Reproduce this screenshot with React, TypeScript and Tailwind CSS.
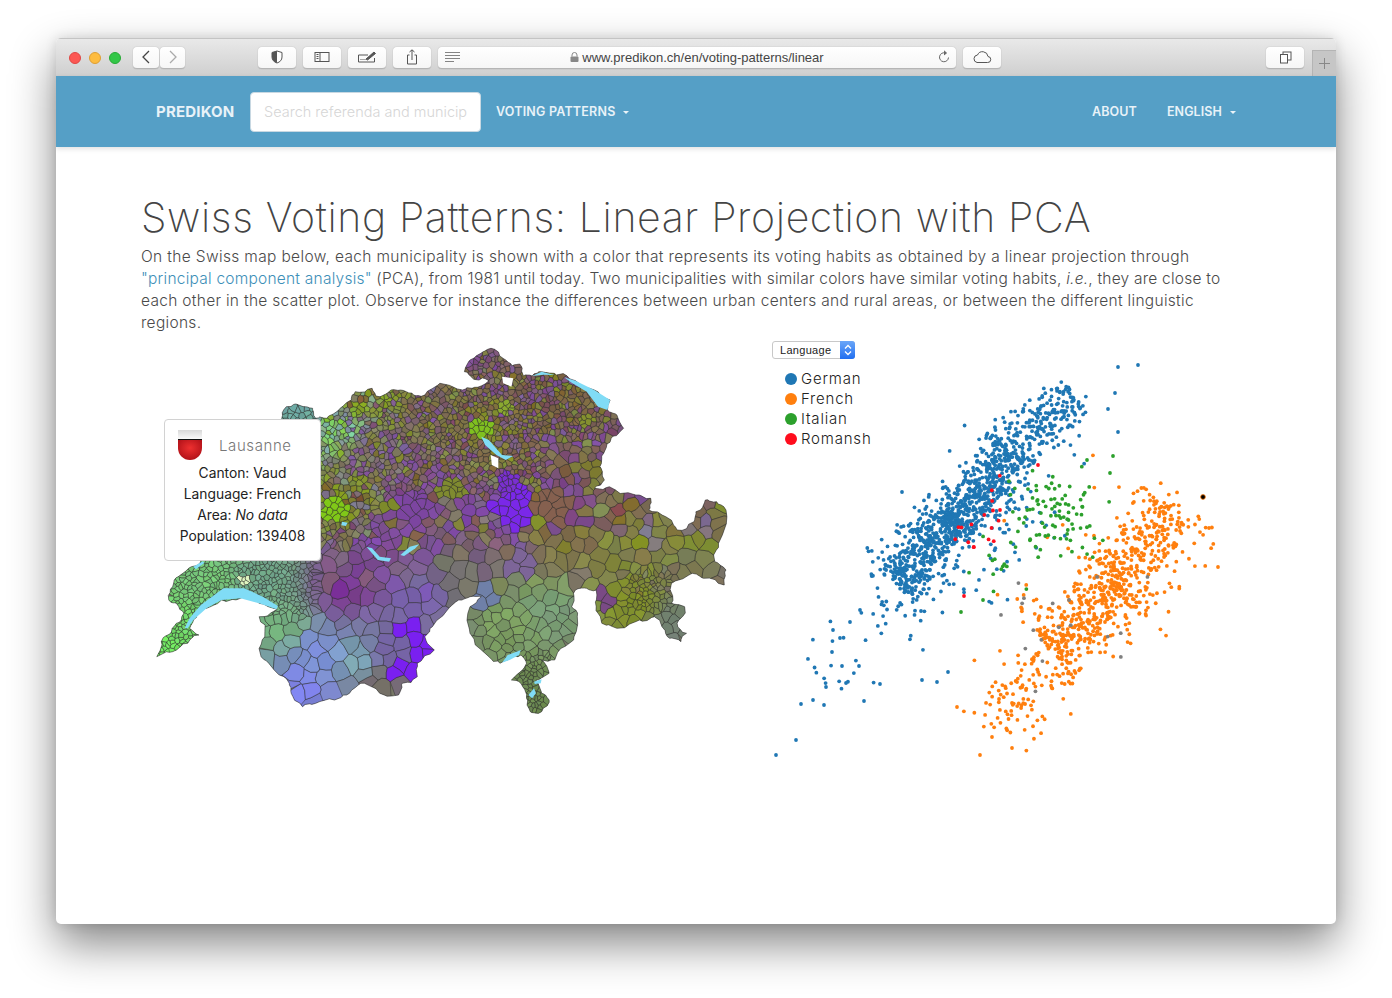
import { useMemo } from 'react';

type Pt = [number, number];

// all map numbers below are traced from the picture, then scaled to page pixels
const toPage = (p: Pt): Pt => [150 + p[0] * 0.3765, 340 + p[1] / 3];
const toPath = (pts: Pt[]) => 'M' + pts.map((p) => p[0].toFixed(1) + ' ' + p[1].toFixed(1)).join('L') + 'Z';

const outlineRaw: Pt[] = [
  [18, 950], [30, 905], [55, 880], [70, 850], [90, 820], [70, 790], [50, 780], [60, 740], [75, 710], [110, 680], [135, 664],
  [215, 600], [300, 420], [335, 270], [350, 235], [362, 200], [395, 195], [432, 205], [440, 235], [470, 235], [505, 205],
  [535, 180], [545, 155], [590, 145], [600, 168], [640, 150], [665, 150], [700, 165], [730, 165], [770, 130], [830, 150],
  [862, 142], [900, 122], [860, 118], [835, 95], [850, 60], [885, 35], [915, 28], [945, 60], [960, 78], [982, 72], [992, 108],
  [1015, 108], [1040, 95], [1080, 105], [1130, 122], [1180, 150], [1222, 180], [1215, 210], [1240, 225], [1258, 265],
  [1225, 295], [1205, 340], [1195, 380], [1207, 420], [1180, 445], [1220, 440], [1290, 465], [1330, 475], [1325, 510],
  [1370, 530], [1400, 570], [1445, 545], [1450, 515], [1475, 480], [1505, 485], [1530, 510], [1510, 610], [1500, 665],
  [1530, 690], [1525, 735], [1470, 715], [1440, 700], [1385, 730], [1385, 790], [1420, 800], [1400, 850], [1425, 880],
  [1410, 905], [1380, 895], [1360, 860], [1340, 830], [1300, 840], [1240, 865], [1200, 850], [1185, 800], [1185, 750],
  [1160, 745], [1130, 750], [1120, 800], [1135, 830], [1125, 900], [1075, 960], [1040, 960], [1060, 1000], [1025, 1020],
  [1040, 1060], [1060, 1080], [1040, 1115], [1010, 1115], [1000, 1075], [990, 1040], [960, 1020], [1000, 970], [985, 945],
  [950, 960], [930, 970], [900, 950], [850, 880], [850, 800], [880, 770], [850, 770], [820, 780], [790, 810], [750, 860],
  [730, 890], [755, 930], [710, 970], [710, 1010], [670, 1030], [660, 1065], [610, 1060], [560, 1030], [530, 1060],
  [490, 1080], [440, 1090], [405, 1100], [375, 1060], [370, 1030], [330, 990], [295, 950], [305, 890], [290, 830],
  [338, 808], [290, 790], [240, 775], [190, 780], [150, 805], [115, 840], [105, 865], [130, 885], [100, 910], [60, 935],
];

const lakesRaw: Pt[][] = [
  [[92, 865], [105, 835], [135, 795], [195, 745], [250, 745], [300, 770], [340, 798], [336, 808], [290, 790], [240, 775], [190, 780], [150, 805], [115, 840], [100, 865]],
  [[575, 620], [590, 625], [610, 650], [640, 655], [635, 665], [605, 660]],
  [[665, 645], [690, 620], [715, 613], [705, 625], [675, 648]],
  [[880, 290], [900, 300], [935, 345], [965, 348], [945, 360], [920, 345], [890, 315]],
  [[1100, 112], [1130, 122], [1180, 150], [1222, 180], [1215, 210], [1190, 200], [1160, 155], [1120, 128]],
  [[1015, 108], [1040, 95], [1075, 105], [1045, 104]],
  [[935, 968], [950, 945], [985, 930], [980, 945], [955, 960]],
  [[1005, 1065], [1020, 1045], [1025, 1060], [1015, 1075]],
  [[1020, 1025], [1040, 1018], [1038, 1030], [1022, 1032]],
  [[510, 545], [525, 548], [520, 558], [508, 556]],
  [[115, 680], [140, 664], [145, 668], [122, 688]],
];

const anchors: [number, number, string][] = [
  [50, 920, '#6ee860'], [90, 870, '#70d868'], [150, 720, '#74c878'], [300, 720, '#6fa78a'], [330, 850, '#73b27e'], [400, 220, '#6aa8a0'],
  [500, 270, '#80d8a0'], [560, 170, '#84b020'], [590, 330, '#7c6a78'], [520, 470, '#7f9a20'], [650, 620, '#7a4a90'], [520, 740, '#7a3c8e'],
  [450, 950, '#7a90d8'], [400, 1050, '#7a80e4'], [550, 960, '#78a2b2'], [640, 930, '#7060a0'], [610, 1040, '#706868'],
  [830, 720, '#707070'], [720, 750, '#7860b0'], [900, 520, '#7a4a90'], [950, 850, '#7aa060'], [1060, 800, '#78a078'], [1000, 1060, '#6a8a50'],
  [1120, 620, '#807a48'], [1300, 620, '#809030'], [1460, 600, '#7f9a2e'], [1450, 690, '#77775a'], [1490, 510, '#75606a'], [1280, 790, '#7f8f28'],
  [1390, 850, '#6f7f70'], [900, 260, '#807a30'], [750, 230, '#7a6a50'], [1100, 350, '#7a5a60'], [1100, 450, '#7a5060'],
  [1060, 510, '#806050'], [890, 70, '#7a5a70'], [1220, 500, '#77506a'], [1050, 170, '#78603f'], [700, 480, '#7d4a8c'],
];

// cells with a strong colour of their own: [x, y, radius, colour]
const blobs: [number, number, number, string][] = [
  [970, 500, 62, '#7a28e8'], [950, 430, 34, '#7a30d0'], [690, 870, 34, '#7a20f0'], [735, 930, 38, '#7a20f0'], [682, 990, 44, '#7a20f0'],
  [880, 265, 30, '#80c020'], [490, 510, 35, '#80c818'], [940, 200, 22, '#8aa830'], [1070, 500, 55, '#85604f'], [510, 750, 30, '#7a2f98'],
  [885, 785, 36, '#6f80a8'], [985, 670, 36, '#7d6598'], [250, 720, 14, '#dff5c0'], [800, 450, 36, '#7f8a30'], [640, 495, 26, '#7d8a2a'],
  [700, 510, 50, '#7c45a0'], [1160, 240, 22, '#85902f'], [1180, 385, 24, '#7d7a30'], [1250, 520, 14, '#8a4c50'], [1210, 780, 30, '#7a4a85'],
];

const hex = (c: string) => [1, 3, 5].map((i) => parseInt(c.slice(i, i + 2), 16));

function rng(seed: number) {
  return () => {
    seed = (seed + 0x6d2b79f5) | 0;
    let t = Math.imul(seed ^ (seed >>> 15), 1 | seed);
    t = (t + Math.imul(t ^ (t >>> 7), 61 | t)) ^ t;
    return ((t ^ (t >>> 14)) >>> 0) / 4294967296;
  };
}

function inside(p: Pt, poly: Pt[]) {
  let hit = false;
  for (let i = 0, j = poly.length - 1; i < poly.length; j = i++) {
    const a = poly[i];
    const b = poly[j];
    if (a[1] > p[1] !== b[1] > p[1] && p[0] < ((b[0] - a[0]) * (p[1] - a[1])) / (b[1] - a[1]) + a[0]) hit = !hit;
  }
  return hit;
}

// how far apart the municipalities are, in page pixels
function spacing(zx: number, zy: number) {
  if (zx < 150 && zy > 820) return 2.6;
  if (zx < 440 && zy > 660 && zy < 830) return 3;
  if (zy > 940 && zx > 940 && zx < 1070) return 2.8;
  if (zx > 1260 && zx < 1390 && zy > 690 && zy < 810) return 3.2;
  if (zy < 300 && zx > 450) return zx > 1200 ? 6 : 3.4;
  if (zy < 470) return zx > 1050 ? 8.5 : 4.2;
  if (zy < 620) return zx > 1000 ? 12 : zx < 600 ? 4.4 : 9;
  if (zy < 800) return 15;
  return zx > 850 ? 9 : 15;
}

function clipHalf(poly: Pt[], a: number, b: number, c: number) {
  const out: Pt[] = [];
  for (let i = 0; i < poly.length; i++) {
    const p = poly[i];
    const q = poly[(i + 1) % poly.length];
    const dp = a * p[0] + b * p[1] - c;
    const dq = a * q[0] + b * q[1] - c;
    if (dp <= 0) out.push(p);
    if (dp < 0 !== dq < 0 && dp !== 0 && dq !== 0) {
      const t = dp / (dp - dq);
      out.push([p[0] + (q[0] - p[0]) * t, p[1] + (q[1] - p[1]) * t]);
    }
  }
  return out;
}

function wobble(poly: Pt[], amount = 0.28) {
  const out: Pt[] = [];
  for (let i = 0; i < poly.length; i++) {
    const p = poly[i];
    const q = poly[(i + 1) % poly.length];
    const mx = (p[0] + q[0]) / 2;
    const my = (p[1] + q[1]) / 2;
    const len = Math.hypot(q[0] - p[0], q[1] - p[1]);
    const r = rng(Math.round(mx * 8) * 7919 + Math.round(my * 8));
    out.push(p);
    if (len > 3) out.push([mx + (r() - 0.5) * len * amount, my + (r() - 0.5) * len * amount]);
  }
  return out;
}

const outlinePage = wobble(wobble(outlineRaw.map(toPage), 0.3), 0.35);

function buildCells() {
  const rand = rng(1981);
  const outline = outlineRaw.map(toPage);
  const sites: Pt[] = [];
  for (let tries = 0; tries < 34000; tries++) {
    const zx = rand() * 1540;
    const zy = rand() * 1120;
    const p = toPage([zx, zy]);
    if (!inside(p, outline)) continue;
    const r = spacing(zx, zy) * (0.6 + rand() * 1.0);
    if (sites.every((s) => (s[0] - p[0]) ** 2 + (s[1] - p[1]) ** 2 > r * r)) sites.push(p);
  }
  const mixes = [hex('#7f40ac'), hex('#7c44a4'), hex('#84961f'), hex('#7a6052'), hex('#86823a')];
  return sites.map((s) => {
    const others = sites
      .filter((o) => o !== s && Math.abs(o[0] - s[0]) < 50 && Math.abs(o[1] - s[1]) < 50)
      .sort((a, b) => (a[0] - s[0]) ** 2 + (a[1] - s[1]) ** 2 - (b[0] - s[0]) ** 2 - (b[1] - s[1]) ** 2);
    let poly: Pt[] = [[s[0] - 34, s[1] - 34], [s[0] + 34, s[1] - 34], [s[0] + 34, s[1] + 34], [s[0] - 34, s[1] + 34]];
    for (const o of others) {
      const a = o[0] - s[0];
      const b = o[1] - s[1];
      poly = clipHalf(poly, a, b, (o[0] * o[0] + o[1] * o[1] - s[0] * s[0] - s[1] * s[1]) / 2);
      if (poly.length < 3) break;
    }
    const zx = (s[0] - 150) / 0.3765;
    const zy = (s[1] - 340) * 3;
    let sum = 0;
    const c = [0, 0, 0];
    for (const [ax, ay, col] of anchors) {
      const w = 1 / ((ax - zx) ** 2 + (ay - zy) ** 2 + 50) ** 1.8;
      const v = hex(col);
      sum += w;
      c[0] += v[0] * w;
      c[1] += v[1] * w;
      c[2] += v[2] * w;
    }
    let rgb = c.map((v) => v / sum);
    const north = zy < 620 && zx > 440 ? 0.85 : zy < 760 && zx > 440 ? 0.35 : 0.08;
    const pick = mixes[Math.floor(rand() * mixes.length)];
    rgb = rgb.map((v, i) => v + (pick[i] - v) * north * rand());
    const shade = 0.97 + rand() * 0.1;
    rgb = rgb.map((v) => Math.min(255, v * shade));
    for (const [bx, by, br, col] of blobs) {
      if ((bx - zx) ** 2 + (by - zy) ** 2 < br * br) rgb = hex(col);
    }
    return {
      d: toPath(wobble(poly)),
      fill: `rgb(${rgb.map((v) => Math.round(v)).join(',')})`,
    };
  });
}

function SwissMap() {
  const cells = useMemo(buildCells, []);
  const outline = toPath(outlinePage);
  return (
    <svg viewBox="141 340 600 390" width={600} height={390} className="block">
      <defs>
        <clipPath id="swiss">
          <path d={outline} />
        </clipPath>
      </defs>
      <g clipPath="url(#swiss)">
        <path d={outline} fill="#776" />
        {cells.map((c, i) => (
          <path key={i} d={c.d} fill={c.fill} stroke="#2a2a2a" strokeWidth={0.45} strokeLinejoin="round" />
        ))}
      </g>
      <path d={outline} fill="none" stroke="#333" strokeWidth={0.6} />
      {lakesRaw.map((l, i) => (
        <path key={i} d={toPath(l.map(toPage))} fill="#80dcf6" />
      ))}
      <path d={toPath(([[905, 345], [925, 355], [925, 385], [908, 375]] as Pt[]).map(toPage))} fill="#fff" />
      <path d={toPath(([[935, 110], [965, 115], [960, 140], [938, 130]] as Pt[]).map(toPage))} fill="#fff" />
    </svg>
  );
}

type Dot = { x: number; y: number; c: string };

function buildDots() {
  const rand = rng(4242);
  const gauss = () => Math.sqrt(-2 * Math.log(rand() + 1e-6)) * Math.cos(2 * Math.PI * rand());
  const dots: Dot[] = [];
  const ridge = (n: number, a: Pt, b: Pt, s: number, c: string) => {
    const dx = b[0] - a[0];
    const dy = b[1] - a[1];
    const len = Math.hypot(dx, dy);
    for (let i = 0; i < n; i++) {
      const t = rand();
      const off = gauss() * s;
      dots.push({ x: a[0] + dx * t - (dy / len) * off, y: a[1] + dy * t + (dx / len) * off, c });
    }
  };
  const blue = '#1f77b4';
  const orange = '#ff7f0e';
  const green = '#2ca02c';
  ridge(60, [820, 680], [950, 560], 20, blue);
  ridge(90, [880, 600], [1090, 385], 28, blue);
  ridge(420, [895, 585], [955, 515], 14, blue);
  ridge(420, [950, 530], [1010, 450], 13, blue);
  ridge(230, [1000, 455], [1075, 395], 13, blue);
  ridge(70, [950, 580], [1030, 490], 30, blue);
  ridge(130, [990, 735], [1130, 570], 24, orange);
  ridge(70, [1000, 715], [1060, 650], 18, orange);
  ridge(280, [1045, 645], [1130, 585], 15, orange);
  ridge(230, [1110, 590], [1170, 505], 17, orange);
  ridge(60, [1125, 610], [1205, 510], 28, orange);
  ridge(40, [1040, 640], [1170, 490], 36, orange);
  for (let i = 0; i < 90; i++) dots.push({ x: 1058 + gauss() * 20, y: 515 + gauss() * 24, c: green });
  for (let i = 0; i < 14; i++) dots.push({ x: 1000 + gauss() * 18, y: 565 + gauss() * 14, c: green });
  for (let i = 0; i < 16; i++) dots.push({ x: 982 + gauss() * 16, y: 525 + gauss() * 18, c: '#ff0d1d' });
  for (let i = 0; i < 18; i++) dots.push({ x: 1085 + gauss() * 40, y: 615 + gauss() * 30, c: '#7f7f7f' });
  const singles: [number, number, string][] = [
    [1138, 365, blue], [1118, 367, blue], [1115, 393, blue], [1108, 409, blue], [1118, 432, blue], [776, 755, blue], [796, 740, blue],
    [801, 704, blue], [813, 700, blue], [824, 705, blue], [826, 687, blue], [864, 701, blue], [880, 684, blue], [846, 683, blue],
    [922, 680, blue], [937, 682, blue], [948, 672, blue], [859, 666, blue], [842, 666, blue], [902, 492, blue],
    [833, 630, blue], [840, 638, blue], [850, 622, blue], [860, 610, blue], [832, 652, blue],
    [980, 755, orange], [992, 737, orange], [1012, 748, orange], [957, 707, orange], [1218, 567, orange], [1209, 528, orange],
    [1110, 473, green], [1113, 456, green], [1087, 460, green], [961, 612, green], [983, 600, green],
    [964, 596, '#ff0d1d'], [1038, 465, '#ff0d1d'], [1000, 510, '#ff0d1d'],
  ];
  for (const [x, y, c] of singles) dots.push({ x, y, c });
  return dots.filter((d) => d.y > 362 && d.y < 760 && d.x < 1222 && !(d.x < 880 && d.y < 450) && d.x + d.y * 0.97 > 1180);
}

function Scatter() {
  const dots = useMemo(buildDots, []);
  return (
    <svg viewBox="760 340 480 430" width={480} height={430} className="block">
      {dots.map((d, i) => (
        <circle key={i} cx={d.x} cy={d.y} r={1.9} fill={d.c} />
      ))}
      <circle cx={1203} cy={497} r={2.4} fill="#000" stroke="#ff7f0e" strokeWidth={0.8} />
    </svg>
  );
}

function Bar({ className = '', children }: { className?: string; children?: React.ReactNode }) {
  return (
    <div className={`h-[22px] flex items-center justify-center bg-gradient-to-b from-[#ffffff] to-[#f6f6f6] rounded-[4px] border-b border-[#b5b5b5] shadow-[0_0_1px_rgba(0,0,0,0.35)] ${className}`}>
      {children}
    </div>
  );
}

function Caret() {
  return <span className="ml-2 inline-block border-x-[3px] border-t-[3px] border-x-transparent border-t-[#eaf3f8]" />;
}

const legend = [
  ['German', 'bg-[#1f77b4]'],
  ['French', 'bg-[#ff7f0e]'],
  ['Italian', 'bg-[#2ca02c]'],
  ['Romansh', 'bg-[#ff0d1d]'],
];

export default function App() {
  return (
    <div className="w-[1392px] h-[998px] bg-white pt-[38px] pl-[56px] overflow-hidden font-['Inter',sans-serif]">
      <div className="w-[1280px] h-[886px] rounded-[5px] bg-white overflow-hidden shadow-[0_20px_45px_rgba(0,0,0,0.48),0_0_12px_rgba(0,0,0,0.12)]">
        {/* safari toolbar */}
        <div className="h-[38px] flex items-center bg-gradient-to-b from-[#e9e9e9] to-[#cfcfcf] border-t border-[#c4c4c4] relative">
          <span className="ml-[13px] w-3 h-3 rounded-full bg-[#fc5753] border border-[#df4744]" />
          <span className="ml-2 w-3 h-3 rounded-full bg-[#fdbc40] border border-[#de9f34]" />
          <span className="ml-2 w-3 h-3 rounded-full bg-[#33c748] border border-[#27aa35]" />
          <Bar className="ml-3 w-[26px]">
            <svg width="10" height="14" viewBox="0 0 10 14" fill="none" stroke="#444" strokeWidth="1.3"><path d="M8 1 2 7l6 6" /></svg>
          </Bar>
          <Bar className="ml-px w-[25px]">
            <svg width="10" height="14" viewBox="0 0 10 14" fill="none" stroke="#aaa" strokeWidth="1.3"><path d="m2 1 6 6-6 6" /></svg>
          </Bar>
          <Bar className="ml-[73px] w-[38px]">
            <svg width="14" height="14" viewBox="0 0 14 14"><path d="M7 1 2 2.5V7c0 3 2 5 5 6 3-1 5-3 5-6V2.5z" fill="#fff" stroke="#555" /><path d="M7 1 2 2.5V7c0 3 2 5 5 6z" fill="#555" /></svg>
          </Bar>
          <Bar className="ml-[7px] w-[38px]">
            <svg width="16" height="12" viewBox="0 0 16 12" fill="none" stroke="#555"><rect x="1" y="1.5" width="14" height="9" /><path d="M6 1.5v9M2.5 3.5h2M2.5 5.5h2M2.5 7.5h2" /></svg>
          </Bar>
          <Bar className="ml-[7px] w-[38px]">
            <svg width="20" height="14" viewBox="0 0 20 14" fill="none" stroke="#555"><path d="M11 5H1.5v7h16V8" /><path d="M3.5 9.5h5" strokeDasharray="1 1" /><path d="m9 9 8-7 1.5 1.5-8 6.5z" fill="#555" /></svg>
          </Bar>
          <Bar className="ml-[7px] w-[38px]">
            <svg width="12" height="16" viewBox="0 0 12 16" fill="none" stroke="#555"><path d="M3.5 6H1.5v9h9V6H8.500" /><path d="M6 11V1M3.500 3 6 .8 8.500 3" /></svg>
          </Bar>
          <Bar className="ml-[7px] w-[518px] relative">
            <svg className="absolute left-[7px]" width="15" height="10" viewBox="0 0 15 10" stroke="#666" strokeWidth="0.8"><path d="M0 .5h15M0 3.500h15M0 6.500h15M0 9.500h9" /></svg>
            <svg className="mr-[3px]" width="9" height="10" viewBox="0 0 9 10"><path d="M2 4.500V3a2.500 2.500 0 0 1 5 0v1.500" fill="none" stroke="#888" /><rect x="0.500" y="4.500" width="8" height="5.500" rx="1" fill="#888" /></svg>
            <span className="pt-px text-[13px] text-[#444] font-['Liberation_Sans',sans-serif]">www.predikon.ch/en/voting-patterns/linear</span>
            <svg className="absolute right-[6px]" width="12" height="14" viewBox="0 0 12 14" fill="none" stroke="#666"><path d="M7.500 3A4.500 4.500 0 1 0 10.500 7.500" /><path d="M6 .8 8.500 3 6 5" fill="#666" /></svg>
          </Bar>
          <Bar className="ml-[7px] w-[38px]">
            <svg width="20" height="14" viewBox="0 0 20 14" fill="none" stroke="#555"><path d="M5 12.500h10.500a3 3 0 0 0 .5-6 5.500 5.500 0 0 0-10.500-1.500A3.800 3.800 0 0 0 5 12.500z" /></svg>
          </Bar>
          <Bar className="ml-[265px] w-[38px]">
            <svg width="13" height="13" viewBox="0 0 13 13" fill="#fff" stroke="#555"><rect x="4" y="1" width="8" height="8" /><rect x="1.500" y="3.500" width="7" height="8.500" /></svg>
          </Bar>
          <div className="absolute right-0 bottom-0 w-6 h-[26px] bg-[#c6c6c6] border-l border-t border-[#b4b4b4] flex items-center justify-center">
            <svg width="11" height="11" viewBox="0 0 11 11" stroke="#888"><path d="M5.500 0v11M0 5.500h11" /></svg>
          </div>
        </div>

        {/* site navbar */}
        <nav className="h-[71px] pl-[100px] pr-[100px] flex items-center bg-[#559fc6] shadow-[0_2px_5px_rgba(0,0,0,0.12)] relative text-[#e8f2f8]">
          <a className="w-[94px] pt-px text-[15px] tracking-[0.2px] font-bold whitespace-nowrap">PREDIKON</a>
          <input
            placeholder="Search referenda and municipalities"
            className="w-[231px] h-10 px-[13px] bg-white rounded-[4px] border border-[#c8d8e2] text-[14.500px] font-light placeholder:text-[#d6d6d6] outline-none"
          />
          <a className="ml-[15px] pt-[2px] text-[12.500px] tracking-[0.2px] font-semibold whitespace-nowrap flex items-center">
            VOTING PATTERNS
            <Caret />
          </a>
          <a className="ml-auto pt-[2px] text-[12.500px] tracking-[0.1px] font-semibold">ABOUT</a>
          <a className="ml-[30px] pt-[2px] text-[12.500px] tracking-[0.1px] font-semibold flex items-center">
            ENGLISH
            <Caret />
          </a>
        </nav>

        <main className="pl-[85px]">
          <h1 className="pt-[45px] text-[41px] leading-[50px] tracking-[0.62px] font-extralight text-[#444] whitespace-nowrap">
            Swiss Voting Patterns: Linear Projection with PCA
          </h1>
          <p className="mt-[4px] text-[15.500px] leading-[22px] font-light text-[#4a4a4a] whitespace-nowrap">
            <span className="block tracking-[0.35px]">
              On the Swiss map below, each municipality is shown with a color that represents its voting habits as obtained by a linear projection through
            </span>
            <span className="block tracking-[0.23px]">
              <a className="text-[#3d8fb8]">"principal component analysis"</a> (PCA), from 1981 until today. Two municipalities with similar colors have similar voting habits, <em>i.e.</em>, they are close to
            </span>
            <span className="block tracking-[0.3px]">
              each other in the scatter plot. Observe for instance the differences between urban centers and rural areas, or between the different linguistic
            </span>
            <span className="block tracking-[0.3px]">regions.</span>
          </p>

          <div className="mt-[6px] flex">
            <div className="relative w-[619px]">
              <SwissMap />
              <div className="absolute left-[23px] top-[79px] w-[157px] h-[142px] bg-white border border-[#d2d2d2] rounded-[4px] text-center text-[13.800px] leading-[21px] text-[#222]">
                <div className="h-[42px] flex items-center pl-[13px] pt-[8px]">
                  <svg width="24" height="30" viewBox="0 0 24 30">
                    <defs>
                      <linearGradient id="top" x1="0" y1="0" x2="0" y2="1">
                        <stop offset="0" stopColor="#d8d8d8" />
                        <stop offset="1" stopColor="#fafafa" />
                      </linearGradient>
                      <radialGradient id="red" cx="0.5" cy="0.4" r="0.7">
                        <stop offset="0" stopColor="#ee3030" />
                        <stop offset="1" stopColor="#a80d15" />
                      </radialGradient>
                    </defs>
                    <path d="M0 0h24v9H0z" fill="url(#top)" />
                    <path d="M0 10h24v8a12 12 0 0 1-24 0z" fill="url(#red)" />
                    <path d="M0 9.500h24" stroke="#111" />
                  </svg>
                  <span className="ml-[17px] pt-[1px] text-[15px] tracking-[0.6px] font-light text-[#777]">Lausanne</span>
                </div>
                <div className="pt-[1px]">Canton: Vaud</div>
                <div>Language: French</div>
                <div>
                  Area: <em>No data</em>
                </div>
                <div>Population: 139408</div>
              </div>
            </div>

            <div className="relative">
              <Scatter />
              <div className="absolute left-3 top-[1px] w-[83px] h-[18px] flex items-center bg-white rounded-[3px] border border-[#c8c8c8] text-[11px] text-[#222] font-['Liberation_Sans',sans-serif]">
                <span className="pl-[7px] flex-1 tracking-[0.3px]">Language</span>
                <span className="w-[15px] h-[18px] -mr-px rounded-r-[3px] bg-gradient-to-b from-[#6aa6f8] to-[#1f6ef0] flex items-center justify-center">
                  <svg width="8" height="12" viewBox="0 0 8 12" fill="none" stroke="#fff" strokeWidth="1.300"><path d="m1 4.500 3-3 3 3M1 7.500l3 3 3-3" /></svg>
                </span>
              </div>
              <ul className="absolute left-[25px] top-[29px] text-[15px] leading-[20px] tracking-[0.8px] font-light text-[#222]">
                {legend.map(([name, dot]) => (
                  <li key={name} className="flex items-center h-5">
                    <span className={`w-3 h-3 rounded-full mr-1 ${dot}`} />
                    {name}
                  </li>
                ))}
              </ul>
            </div>
          </div>
        </main>
      </div>
    </div>
  );
}
